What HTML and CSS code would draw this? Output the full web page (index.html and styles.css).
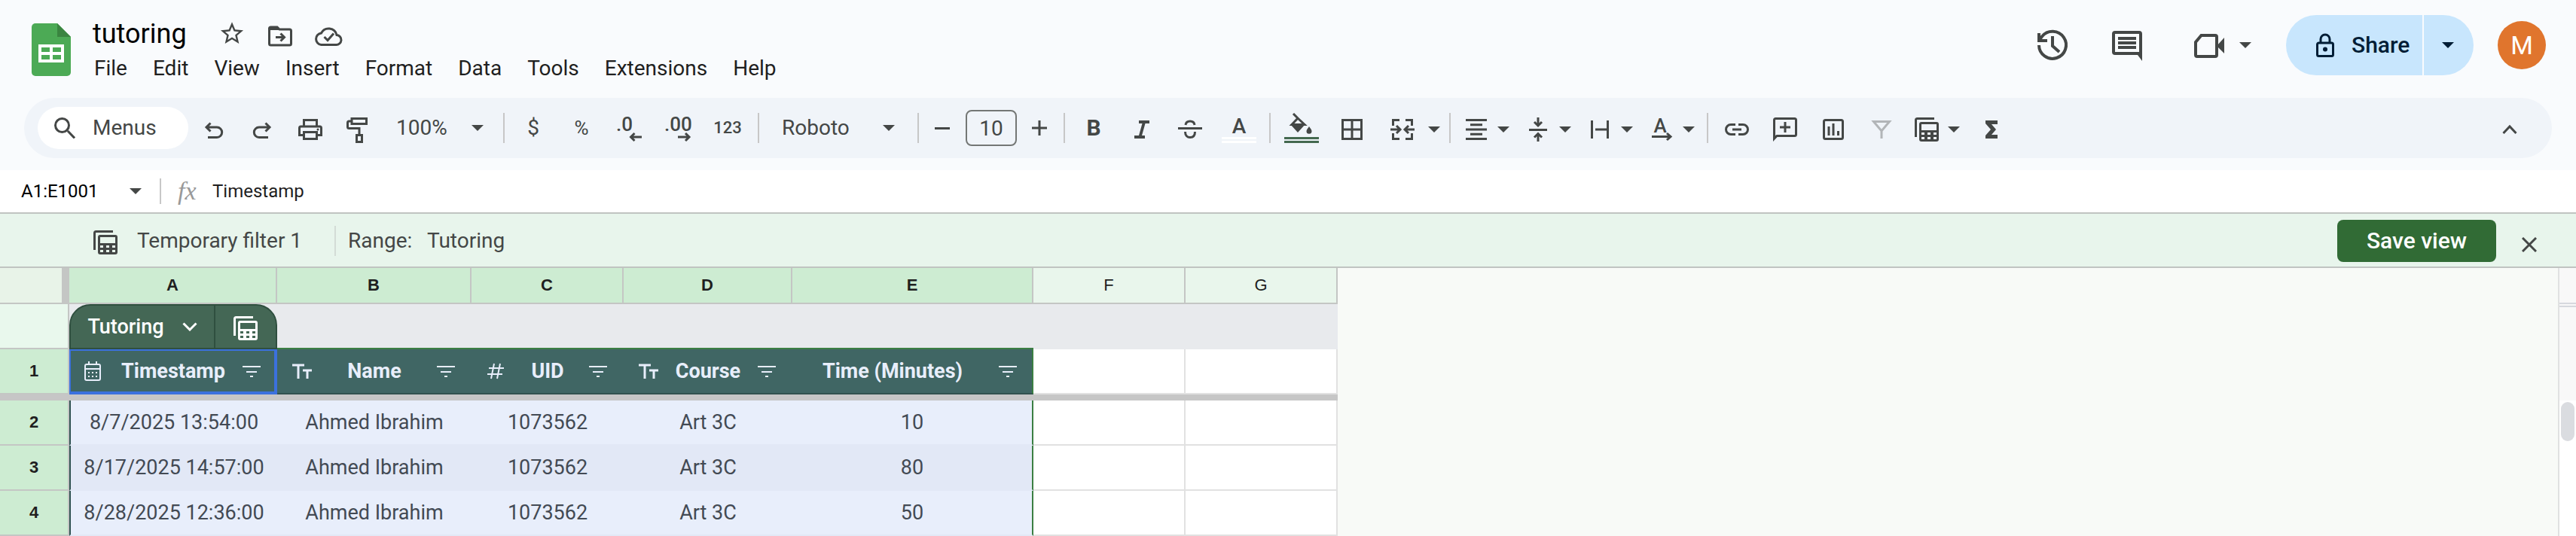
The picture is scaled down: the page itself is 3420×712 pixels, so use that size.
FILE: index.html
```html
<!DOCTYPE html>
<html lang="en">
<head>
<meta charset="utf-8">
<title>tutoring</title>
<link rel="stylesheet" href="styles.css">
</head>
<body>
<svg class="defs" aria-hidden="true">
  <symbol id="caret" viewBox="0 0 16 8"><path d="M0 0h16l-8 8z" fill="currentColor"/></symbol>
  <symbol id="views" viewBox="0 0 40 40">
    <path d="M5.5 32V9.5a2 2 0 0 1 2-2H30" fill="none" stroke="currentColor" stroke-width="3"/>
    <path fill="currentColor" fill-rule="evenodd" d="M13 12h20a3 3 0 0 1 3 3v20a3 3 0 0 1-3 3H13a3 3 0 0 1-3-3V15a3 3 0 0 1 3-3zM13 15v8h20v-8zM13 26v3h4v-3zM21 26v3h4v-3zM29 26v3h4v-3zM13 32v3h4v-3zM21 32v3h4v-3zM29 32v3h4v-3z"/>
  </symbol>
  <symbol id="sort" viewBox="0 0 24 16"><path d="M0 2h24M5 9h14M10 15h4" fill="none" stroke="currentColor" stroke-width="2"/></symbol>
  <symbol id="texttype" viewBox="0 0 26 22"><path d="M0 3h16M8 3v18M14 10h12M20 10v11" fill="none" stroke="currentColor" stroke-width="3"/></symbol>
</svg>

<header class="app">
  <div class="top">
    <svg class="logo" viewBox="0 0 52 70" role="img" aria-label="Sheets">
      <path d="M5 0h29l18 18v47a5 5 0 0 1-5 5H5a5 5 0 0 1-5-5V5a5 5 0 0 1 5-5z" fill="#4caa55"/>
      <path d="M34 0l18 18H34z" fill="#3a8540"/>
      <path fill="#fff" fill-rule="evenodd" d="M9 28h34v24H9zM13 32v6h11v-6zM28 32v6h11v-6zM13 42v6h11v-6zM28 42v6h11v-6z"/>
    </svg>
    <div class="doc">
      <div class="title-row">
        <h1>tutoring</h1>
        <button class="plain" aria-label="Star"><svg class="ic" viewBox="-1.3 -.9 26.6 26.6"><path fill="currentColor" d="M22 9.24l-7.19-.62L12 2 9.19 8.63 2 9.24l5.46 4.73L5.82 21 12 17.27 18.18 21l-1.63-7.03L22 9.24zM12 15.4l-3.76 2.27 1-4.28-3.32-2.88 4.38-.38L12 6.1l1.71 4.04 4.38.38-3.32 2.88 1 4.28L12 15.4z"/></svg></button>
        <button class="plain" aria-label="Move"><svg class="ic line" viewBox="0 0 40 40"><path d="M5.500 12v21a2 2 0 0 0 2 2h25a2 2 0 0 0 2-2V16a2 2 0 0 0-2-2H19l-3-3H7.500a2 2 0 0 0-2 2z"/><path d="M6 11h10l3 4H6z" fill="currentColor" stroke="none"/><path d="M14 24.500h11M20.500 19.500l5 5-5 5"/></svg></button>
        <button class="plain" aria-label="Saved to Drive"><svg class="ic line" viewBox="0 0 40 40"><path d="M10.500 34.500H30a6.500 6.500 0 0 0 1-13A11 11 0 0 0 10.500 19a7.800 7.800 0 0 0 0 15.500zM14.500 24l4.500 4.500 8-9"/></svg></button>
      </div>
      <nav class="menus">
        <button>File</button><button>Edit</button><button>View</button><button>Insert</button><button>Format</button><button>Data</button><button>Tools</button><button>Extensions</button><button>Help</button>
      </nav>
    </div>
    <div class="actions">
      <button class="act" aria-label="Version history"><svg class="big" viewBox="0 0 48 48"><path d="M6 24A18 18 0 1 0 10 12.500L7 17M6 8v10h11M24 12v13l9 8"/></svg></button>
      <button class="act" aria-label="Comments"><svg class="big" viewBox="0 0 48 48"><path d="M42 36V9a2 2 0 0 0-2-2H8a2 2 0 0 0-2 2v24a2 2 0 0 0 2 2h32M12 15h24M12 21h24M12 27h24"/><path d="M35 33h9v12z" fill="currentColor" stroke="none"/></svg></button>
      <button class="meet" aria-label="Meet"><svg class="big" viewBox="0 0 48 48"><path d="M13.500 11H32a2 2 0 0 1 2 2v24a2 2 0 0 1-2 2H8a2 2 0 0 1-2-2V20z"/><path d="M34 25l10-11v21z" fill="currentColor" stroke="none"/></svg><svg class="caret"><use href="#caret"/></svg></button>
      <div class="share">
        <button class="share-main"><svg class="lock" viewBox="0 0 24 32"><path d="M3.500 13h17a2 2 0 0 1 2 2v13.500a2 2 0 0 1-2 2h-17a2 2 0 0 1-2-2V15a2 2 0 0 1 2-2zM6 13V8a6 6 0 0 1 12 0v5" fill="none" stroke="currentColor" stroke-width="3"/><circle cx="12" cy="21.500" r="3" fill="currentColor"/></svg>Share</button>
        <button class="share-more" aria-label="Share options"><svg class="caret"><use href="#caret"/></svg></button>
      </div>
      <button class="avatar">M</button>
    </div>
  </div>

  <div class="toolbar">
    <label class="search"><svg class="find" viewBox="0 0 28 28"><path d="M18 18l9 9.500M10.500 1.500a9 9 0 1 1 0 18 9 9 0 0 1 0-18z" fill="none" stroke="currentColor" stroke-width="3"/></svg><input type="text" placeholder="Menus" aria-label="Menus"></label>
    <button class="tb" aria-label="Undo"><svg class="ic line" viewBox="0 0 40 40"><path d="M15.500 13.500L10 19l5.500 5.500M10 19h14a6.700 6.700 0 0 1 0 13.400H12"/></svg></button>
    <button class="tb" aria-label="Redo"><svg class="ic line" viewBox="0 0 40 40"><path d="M24.500 13.500L30 19l-5.500 5.500M30 19H16a6.700 6.700 0 0 0 0 13.400h12"/></svg></button>
    <button class="tb" aria-label="Print"><svg class="ic line" viewBox="0 0 40 40"><path d="M11.500 17V9.500h17V17M10 29.500H5.500V20a2 2 0 0 1 2-2h25a2 2 0 0 1 2 2v9.500H30M11.500 25.500h17v9h-17z"/><circle cx="30" cy="22" r="1.500" fill="currentColor" stroke="none"/></svg></button>
    <button class="tb" aria-label="Paint format"><svg class="ic line" viewBox="0 0 40 40"><path d="M11 7.500h19.500v7H11zM11 11H7.500a2 2 0 0 0-2 2v5.500a2 2 0 0 0 2 2H21V28M17.500 29.500h7v9h-7z"/></svg></button>
    <label class="drop zoom"><select aria-label="Zoom"><option>100%</option></select><svg class="caret"><use href="#caret"/></svg></label>
    <span class="sep"></span>
    <button class="tb">$</button>
    <button class="tb pct">%</button>
    <button class="tb" aria-label="Decrease decimal places"><svg class="ic line" viewBox="0 0 40 40"><text class="dec" x="2" y="24">.0</text><path d="M36 32H22M26.500 27l-5 5 5 5"/></svg></button>
    <button class="tb" aria-label="Increase decimal places"><svg class="ic line" viewBox="0 0 40 40"><text class="dec" x="2" y="24">.00</text><path d="M20 32h14M30 27l5 5-5 5"/></svg></button>
    <button class="tb fmt">123</button>
    <span class="sep"></span>
    <label class="drop font"><select aria-label="Font"><option>Roboto</option></select><svg class="caret"><use href="#caret"/></svg></label>
    <span class="sep"></span>
    <button class="tb step" aria-label="Decrease font size"><svg class="ic line" viewBox="0 0 40 40"><path d="M10 20.500h20"/></svg></button>
    <input class="size" type="text" value="10" aria-label="Font size">
    <button class="tb step" aria-label="Increase font size"><svg class="ic line" viewBox="0 0 40 40"><path d="M9 20h20M19 10v20"/></svg></button>
    <span class="sep"></span>
    <button class="tb bold">B</button>
    <button class="tb" aria-label="Italic"><svg class="ic" viewBox="0 0 40 40"><path fill="currentColor" d="M16 10v4h4.500l-4.500 16h-6v4h14v-4h-4l4.500-16H30v-4z"/></svg></button>
    <button class="tb" aria-label="Strikethrough"><svg class="ic line" viewBox="0 0 40 40"><path d="M4 20.500h32M14 16c.5-4 3-5 6-5s5.500 1 6 5M13.500 25c0 5 3 7.500 6.500 7.500s6.500-2 6.500-7.500"/></svg></button>
    <button class="tb" aria-label="Text color"><svg class="wide" viewBox="0 0 48 40"><text class="letter" x="25" y="27">A</text><path d="M2 32h46v3H2zM2 37h46v3H2z" fill="#fff"/></svg></button>
    <span class="sep loose"></span>
    <button class="tb" aria-label="Fill color"><svg class="wide" viewBox="0 0 48 40"><path d="M13 1l7 7M19 7l-8 8.500h17z" fill="none" stroke="currentColor" stroke-width="3"/><path d="M9 15h20L19 26zM34 18c2 3 3.500 4.500 3.500 6.200a3.500 3.500 0 0 1-7 0C30.500 22.500 32 21 34 18z" fill="currentColor"/><path d="M1 32h46v3H1zM1 37h46v3H1z" fill="#44694f"/></svg></button>
    <button class="tb borders" aria-label="Borders"><svg class="ic line" viewBox="0 0 40 40"><path d="M7.500 9.500h25v25h-25zM20 9v26M7 22h26"/></svg></button>
    <button class="pair merge" aria-label="Merge cells"><svg class="ic line" viewBox="0 0 40 40"><path d="M16 9.500H7.500V17M16 34.500H7.500V27M24 9.500h8.500V17M24 34.500h8.500V27M4 22h12M12 17l5 5-5 5M36 22H24M28 17l-5 5 5 5"/></svg><svg class="caret"><use href="#caret"/></svg></button>
    <span class="sep"></span>
    <button class="pair" aria-label="Horizontal align"><svg class="ic line" viewBox="0 0 40 40"><path d="M6 9.500h28M12 15.700h16M6 22h28M12 28.200h16M6 34.500h28"/></svg><svg class="caret"><use href="#caret"/></svg></button>
    <button class="pair" aria-label="Vertical align"><svg class="ic line" viewBox="0 0 40 40"><path d="M8 22.500h24M20 6v10M15 12l5 5 5-5M20 38V28M15 32.500l5-5 5 5"/></svg><svg class="caret"><use href="#caret"/></svg></button>
    <button class="pair" aria-label="Text wrapping"><svg class="ic line" viewBox="0 0 40 40"><path d="M9.500 10v24M30.500 10v24M14 22h16"/></svg><svg class="caret"><use href="#caret"/></svg></button>
    <button class="pair" aria-label="Text rotation"><svg class="ic line" viewBox="0 0 40 40"><text class="letter small" x="18" y="26">A</text><path d="M7 31.500h24M27 27l5 4.500-5 4.500"/></svg><svg class="caret"><use href="#caret"/></svg></button>
    <span class="sep"></span>
    <button class="tb" aria-label="Insert link"><svg class="ic line" viewBox="0 0 40 40"><path d="M18 15.500h-6a6.500 6.500 0 0 0 0 13h6M22 15.500h6a6.500 6.500 0 0 1 0 13h-6M14 22h12"/></svg></button>
    <button class="tb" aria-label="Insert comment"><svg class="ic line" viewBox="0 0 40 40"><path d="M5.500 34V9.500a2 2 0 0 1 2-2h25a2 2 0 0 1 2 2v19a2 2 0 0 1-2 2H9zM20 12v14M13 19h14"/><path d="M4 30h7l-7 8z" fill="currentColor" stroke="none"/></svg></button>
    <button class="tb" aria-label="Insert chart"><svg class="ic line" viewBox="0 0 40 40"><path d="M9.500 9.500h21a2 2 0 0 1 2 2v21a2 2 0 0 1-2 2h-21a2 2 0 0 1-2-2v-21a2 2 0 0 1 2-2zM14 18v12M20 14v16M26.500 24v6"/></svg></button>
    <button class="tb off" aria-label="Create a filter"><svg class="ic line" viewBox="0 0 40 40"><path d="M9.500 11.500h21L20 24zM20 22v12"/></svg></button>
    <button class="pair" aria-label="Filter views"><svg class="ic"><use href="#views"/></svg><svg class="caret"><use href="#caret"/></svg></button>
    <button class="tb" aria-label="Functions"><svg class="ic" viewBox="0 0 40 40"><path fill="currentColor" d="M12 10h16v5h-8l6 7-6 7h8v5H12v-4l7-8-7-8z"/></svg></button>
    <button class="tb collapse" aria-label="Hide the menus"><svg class="ic line" viewBox="0 0 40 40"><path d="M11.500 27l8.500-9 8.500 9"/></svg></button>
  </div>
</header>

<div class="formula">
  <input class="name" type="text" value="A1:E1001" aria-label="Name box">
  <svg class="caret"><use href="#caret"/></svg>
  <span class="fsep"></span>
  <em class="fx">fx</em>
  <input class="content" type="text" value="Timestamp" aria-label="Formula bar">
</div>

<div class="filterbar">
  <svg class="ic"><use href="#views"/></svg>
  <span class="fname">Temporary filter 1</span>
  <span class="vsep"></span>
  <span class="rlabel">Range:</span>
  <span>Tutoring</span>
  <button class="save">Save view</button>
  <button class="close" aria-label="Close"><svg class="x" viewBox="0 0 20 20"><path d="M1 1l18 18M19 1L1 19" fill="none" stroke="currentColor" stroke-width="3"/></svg></button>
</div>

<main class="sheet">
  <table class="grid">
    <colgroup><col class="c-n"><col class="c-a"><col class="c-b"><col class="c-s"><col class="c-d"><col class="c-e"><col class="c-s"><col class="c-s"></colgroup>
    <tr class="letters"><th class="corner"></th><th>A</th><th>B</th><th>C</th><th>D</th><th>E</th><th class="idle">F</th><th class="idle">G</th></tr>
    <tr class="tabrow">
      <th class="num blank"></th>
      <td><div class="tab"><button class="tname">Tutoring<svg class="chev" viewBox="0 0 20 12"><path d="M1.500 1.500L10 10l8.500-8.500" fill="none" stroke="currentColor" stroke-width="3"/></svg></button><button class="tview" aria-label="Table filter views"><svg class="ic"><use href="#views"/></svg></button></div></td>
      <td colspan="4" class="edge"></td><td colspan="2"></td>
    </tr>
    <tr class="heads">
      <th class="num">1</th>
      <th class="sel"><div class="hd"><span class="slot"><svg class="cal" viewBox="0 0 22 28"><path d="M3 5h16a2 2 0 0 1 2 2v17a2 2 0 0 1-2 2H3a2 2 0 0 1-2-2V7a2 2 0 0 1 2-2zM1 11h20M6 1v5M16 1v5" fill="none" stroke="currentColor" stroke-width="2"/><path d="M5 15h2v2H5zM10 15h2v2h-2zM15 15h2v2h-2zM5 20h2v2H5zM10 20h2v2h-2zM15 20h2v2h-2z" fill="currentColor"/></svg></span><span class="lb">Timestamp</span><span class="slot end"><svg class="sort"><use href="#sort"/></svg></span></div></th>
      <th><div class="hd"><span class="slot"><svg class="tt"><use href="#texttype"/></svg></span><span class="lb">Name</span><span class="slot end"><svg class="sort"><use href="#sort"/></svg></span></div></th>
      <th><div class="hd"><span class="slot"><svg class="hash" viewBox="0 0 24 22"><path d="M3 7h20M1 15h20M10 1L6 21M18 1l-4 20" fill="none" stroke="currentColor" stroke-width="2"/></svg></span><span class="lb">UID</span><span class="slot end"><svg class="sort"><use href="#sort"/></svg></span></div></th>
      <th><div class="hd"><span class="slot"><svg class="tt"><use href="#texttype"/></svg></span><span class="lb">Course</span><span class="slot end"><svg class="sort"><use href="#sort"/></svg></span></div></th>
      <th class="last"><div class="hd"><span class="lb">Time (Minutes)</span><span class="slot end"><svg class="sort"><use href="#sort"/></svg></span></div></th>
      <td></td><td></td>
    </tr>
    <tr class="freeze"><td colspan="8"></td></tr>
    <tr class="data"><th class="num">2</th><td class="first">8/7/2025 13:54:00</td><td>Ahmed Ibrahim</td><td>1073562</td><td>Art 3C</td><td class="last">10</td><td class="out"></td><td class="out"></td></tr>
    <tr class="data alt"><th class="num">3</th><td class="first">8/17/2025 14:57:00</td><td>Ahmed Ibrahim</td><td>1073562</td><td>Art 3C</td><td class="last">80</td><td class="out"></td><td class="out"></td></tr>
    <tr class="data"><th class="num">4</th><td class="first">8/28/2025 12:36:00</td><td>Ahmed Ibrahim</td><td>1073562</td><td>Art 3C</td><td class="last">50</td><td class="out"></td><td class="out"></td></tr>
  </table>
  <div class="scroll"><div class="s-top"></div><div class="s-mid"></div><div class="s-track"><div class="thumb"></div></div></div>
</main>
</body>
</html>
```
FILE: styles.css
```css
* { box-sizing: border-box; }
body { margin: 0; background: #f9fbfd; color: #444746; font-family: Roboto, "Liberation Sans", sans-serif; font-size: 28px; line-height: 32px; }
button, input, select { font: inherit; color: inherit; background: none; border: 0; padding: 0; margin: 0; }
button { display: flex; align-items: center; justify-content: center; flex: none; }
input { min-width: 0; }
svg { display: block; flex: none; }
.defs { position: absolute; width: 0; height: 0; }
.ic { width: 40px; height: 40px; }
.wide { width: 48px; height: 40px; }
.line, .big { fill: none; stroke: currentColor; stroke-width: 3px; }
.big { width: 48px; height: 48px; stroke-width: 4px; }
.caret { width: 16px; height: 8px; }
.dec, .letter { fill: currentColor; stroke: none; font-size: 26px; font-weight: 500; }
.letter { font-size: 28px; text-anchor: middle; }
.small { font-size: 26px; }

.app { padding-bottom: 16px; }
.top { display: flex; align-items: flex-start; padding: 20px 40px 23px 42px; }
.logo { width: 52px; height: 70px; margin: 11px 29px 0 0; }
.doc { padding-top: 3px; }
.title-row { display: flex; align-items: center; gap: 24px; height: 44px; margin-bottom: 8px; }
h1 { margin: 0 16px 0 0; font-size: 36px; line-height: 44px; font-weight: 400; color: #000; }
.menus { display: flex; gap: 34px; color: #1f1f1f; padding-left: 2px; }
.actions { display: flex; align-items: center; height: 80px; margin-left: auto; }
.act { width: 99px; height: 80px; }
.meet { height: 80px; padding: 0 46px 0 36px; gap: 16px; }
.share { display: flex; gap: 2px; height: 80px; margin-right: 32px; color: #001d35; }
.share button { background: #c8e6fd; }
.share-main { width: 181px; gap: 23px; padding-left: 40px; justify-content: flex-start; border-radius: 40px 0 0 40px; font-weight: 500; font-size: 30px; }
.share-more { width: 66px; border-radius: 0 40px 40px 0; padding-right: 2px; }
.lock { width: 24px; height: 32px; }
.avatar { width: 64px; height: 64px; border-radius: 50%; background: #e0752d; color: #fff; font-size: 34px; }

.toolbar { display: flex; align-items: center; height: 80px; margin: 0 32px; padding: 0 24px 0 18px; border-radius: 40px; background: #f0f4f9; }
.search { display: flex; align-items: center; gap: 23px; width: 200px; height: 56px; margin-right: 2px; padding: 0 20px 0 22px; border-radius: 28px; background: #fff; }
.search input { width: 100px; }
.search input::placeholder { color: #444746; opacity: 1; }
.find { width: 28px; height: 28px; }
.tb { width: 64px; height: 56px; }
.pct { font-size: 26px; }
.fmt { width: 68px; font-size: 22px; font-weight: 500; }
.step { width: 50px; }
.bold { font-weight: 700; font-size: 30px; }
.borders { width: 70px; }
.off { color: #b2b5b8; }
.collapse { margin-left: auto; }
.pair { height: 56px; gap: 8px; padding: 4px 10px 0 8px; }
.pair .ic { margin-top: -4px; }
.merge { gap: 14px; padding: 4px 6px 0 12px; }
.sep { width: 2px; height: 40px; margin: 0 6px; background: #c7c7c7; }
.loose { margin: 0 9px; }
.drop { display: flex; align-items: center; justify-content: space-between; height: 56px; }
select { appearance: none; outline: 0; }
.zoom { width: 154px; padding: 0 20px 0 18px; }
.font { width: 198px; padding: 0 24px 0 24px; }
.size { width: 68px; height: 48px; margin: 0 6px; border: 2px solid #747775; border-radius: 8px; text-align: center; }

.formula { display: flex; align-items: center; height: 56px; padding-left: 28px; background: #fff; font-size: 24px; }
.name { width: 144px; color: #000; }
.fsep { width: 2px; height: 34px; margin: 0 22px 0 24px; background: #c7c7c7; }
.fx { width: 46px; color: #999; font: italic 34px/34px "Liberation Serif", serif; }
.content { flex: 1; color: #1f1f1f; }

.filterbar { display: flex; align-items: center; height: 74px; padding: 2px 52px 0 120px; border: solid #c0c4c1; border-width: 2px 0; background: #e8f5ec; }
.fname { margin-left: 22px; width: 262px; }
.vsep { width: 2px; height: 40px; margin-right: 16px; background: #d3dcd6; }
.rlabel { width: 105px; }
.save { width: 211px; height: 56px; margin-left: auto; border-radius: 8px; background: #316b35; color: #fff; font-weight: 500; font-size: 30px; }
.close { margin-left: 34px; padding-top: 10px; }
.x { width: 20px; height: 20px; }

.sheet { display: flex; background: #f8faf7; }
.grid { table-layout: fixed; width: 1776px; flex: none; border-collapse: separate; border-spacing: 0; font-size: 27px; text-align: center; }
.c-n { width: 92px; } .c-a { width: 276px; } .c-b { width: 258px; } .c-s { width: 202px; } .c-d { width: 224px; } .c-e { width: 320px; }
.grid th, .grid td { padding: 0; height: 60px; vertical-align: middle; }
.grid .letters th { height: 48px; border: solid #c4c6c4; border-width: 0 2px 2px 0; background: #cdecd2; color: #1f1f1f; font: bold 22px/26px "Liberation Sans", sans-serif; }
.grid .letters .corner { border-right-width: 10px; background: #e8f3e8; }
.grid .letters .idle { background: #e9f6ec; font-weight: 400; }
.grid .num { border: solid #c4c6c4; border-width: 0 2px 2px 0; background: #cdecd2; color: #1f1f1f; font: bold 22px/26px "Liberation Sans", sans-serif; }
.grid .blank { background: #e9f8ed; }
.tabrow td { background: #e8eaed; }
.tabrow .edge { border-bottom: 2px solid #3b7f43; }
.tab { display: flex; height: 60px; border: 2px solid #2f4f3f; border-radius: 28px 28px 0 0; background: #446755; color: #fff; overflow: hidden; }
.tname { flex: 1; gap: 24px; font-weight: 500; }
.chev { width: 20px; height: 12px; }
.tview { width: 82px; border-left: 2px solid #2f4f3f; }
.heads th:not(.num) { background: #406664; color: #e8eefb; border-bottom: 2px solid #32524f; }
.heads .sel:not(.num) { border: solid #3b71de; border-width: 2px 4px 4px 2px; }
.heads .last:not(.num) { border-right: 2px solid #3b7f43; }
.heads td, .data .out { background: #fff; border: solid #e1e1e1; border-width: 0 2px 2px 0; }
.hd { display: flex; align-items: center; }
.slot { display: flex; width: 54px; padding-left: 20px; }
.sel .slot { width: 52px; padding-left: 18px; }
.end { justify-content: flex-end; padding: 0 22px 0 0; }
.sel .end { width: 50px; padding: 0 18px 0 0; }
.last .end { width: 52px; padding-right: 20px; }
.lb { flex: 1; white-space: nowrap; }
.cal { width: 22px; height: 28px; }
.tt { width: 26px; height: 22px; }
.hash { width: 24px; height: 22px; }
.sort { width: 24px; height: 16px; }
.grid .freeze td { height: 8px; background: #c6c6c6; }
.data td { background: #e8eefb; border-bottom: 2px solid #e2e8f6; color: #434a54; }
.alt td { background: #e2e8f6; }
.data .first { border-left: 2px solid #2f5150; }
.data .last { border-right: 2px solid #3b7f43; }

.scroll { display: flex; flex-direction: column; width: 24px; margin-left: auto; border-left: 2px solid #e0e1e1; background: #fff; }
.s-top { height: 46px; background: #f8f8f8; }
.s-mid { height: 130px; border-top: 6px double #d6d8de; background: #f8f8f8; }
.s-track { flex: 1; padding: 2px; }
.thumb { width: 18px; height: 52px; border-radius: 9px; background: #dadce0; }
```
